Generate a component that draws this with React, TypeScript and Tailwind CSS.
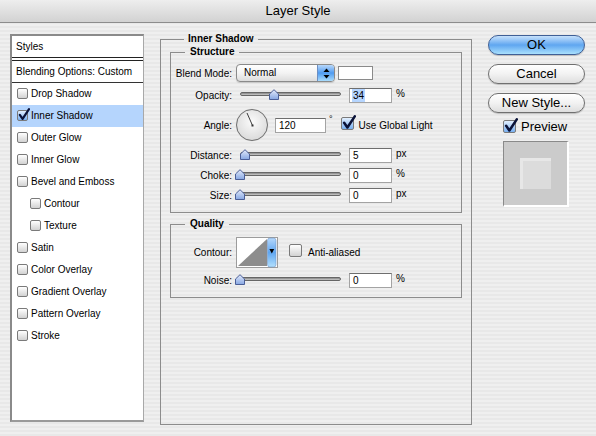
import React from "react";

function Box({ checked = false, size = "s" }: { checked?: boolean; size?: "s" | "m" }) {
  const dim = size === "s" ? "w-[11px] h-[11px]" : "w-[13px] h-[13px]";
  const bg = checked
    ? "bg-linear-to-b from-[#e2effe] to-[#78b0f1]"
    : "bg-linear-to-b from-[#ffffff] to-[#d2d2d2]";
  return (
    <span className={`relative inline-block shrink-0 rounded-[2px] border border-[#7a7a7a] ${dim} ${bg}`}>
      {checked && (
        <svg
          className="absolute left-[0px] top-[-3px]"
          width={size === "s" ? 12 : 14}
          height={size === "s" ? 13 : 15}
          viewBox="0 0 12 13"
        >
          <path
            d="M1.8 6.8 L4.6 10.8 L11 1.2"
            fill="none"
            stroke="#0a1238"
            strokeWidth="2.2"
            strokeLinecap="round"
            strokeLinejoin="round"
          />
        </svg>
      )}
    </span>
  );
}

function Label({ children }: { children: React.ReactNode }) {
  return <span className="w-[61px] shrink-0 text-right">{children}</span>;
}

function Field({ value, wide = false, hl = false }: { value: string; wide?: boolean; hl?: boolean }) {
  return (
    <span
      className={`flex h-[15px] items-center border border-[#a3a3a3] border-t-[#6e6e6e] bg-white pl-[2px] leading-[13px] ${
        wide ? "w-[51px]" : "w-[43px]"
      }`}
    >
      <span className={hl ? "bg-[#b5d5ff] px-[1px]" : "px-[1px]"}>{value}</span>
    </span>
  );
}

function Slider({ thumb }: { thumb: number }) {
  return (
    <div className="relative ml-[3px] h-[16px] w-[111px] shrink-0">
      <div className="absolute left-[5px] top-[5px] h-[4px] w-[101px] rounded-full border border-[#666666] bg-linear-to-b from-[#858585] to-[#cccccc]" />
      <svg className="absolute top-[2px]" style={{ left: thumb }} width="10" height="11" viewBox="0 0 10 11">
        <defs>
          <linearGradient id="tg" x1="0" y1="0" x2="0" y2="1">
            <stop offset="0" stopColor="#e4ebfb" />
            <stop offset="1" stopColor="#86a6e2" />
          </linearGradient>
        </defs>
        <path d="M0.5 10.5 V5 L5 0.7 L9.5 5 V10.5 Z" fill="url(#tg)" stroke="#4b5f97" strokeWidth="1" />
      </svg>
    </div>
  );
}

function SliderRow({
  label,
  thumb,
  value,
  unit,
  hl = false,
  mt,
}: {
  label: string;
  thumb: number;
  value: string;
  unit: string;
  hl?: boolean;
  mt: string;
}) {
  return (
    <div className={`flex h-[16px] items-center ${mt}`}>
      <Label>{label}</Label>
      <Slider thumb={thumb} />
      <span className="ml-[3px]">
        <Field value={value} hl={hl} />
      </span>
      <span className="ml-[4px] -mt-[4px]">{unit}</span>
    </div>
  );
}

function Dial() {
  return (
    <svg width="34" height="34" viewBox="0 0 34 34" className="shrink-0">
      <defs>
        <radialGradient id="dg" cx="50%" cy="40%" r="60%">
          <stop offset="0" stopColor="#fbfbfb" />
          <stop offset="1" stopColor="#dadada" />
        </radialGradient>
      </defs>
      <circle cx="17" cy="17" r="16.2" fill="#d8d8d8" />
      <circle cx="17" cy="17" r="15.5" fill="url(#dg)" stroke="#707070" strokeWidth="1" />
      <line x1="17.5" y1="17.5" x2="12" y2="5" stroke="#3c3c3c" strokeWidth="1" />
      <rect x="16.5" y="16.5" width="2" height="2" fill="#333" />
    </svg>
  );
}

function ContourPicker() {
  return (
    <svg width="42" height="31" viewBox="0 0 42 31" className="shrink-0">
      <defs>
        <linearGradient id="cb" x1="0" y1="0" x2="0" y2="1">
          <stop offset="0" stopColor="#b6d8fb" />
          <stop offset="0.5" stopColor="#5fa6f1" />
          <stop offset="1" stopColor="#b3e0fd" />
        </linearGradient>
      </defs>
      <rect x="0.5" y="0.5" width="41" height="30" fill="#fff" stroke="#9c9c9c" />
      <polygon points="2,29 31,2 31,29" fill="#8d8d8d" />
      <rect x="31.5" y="1" width="8.5" height="29" rx="2.5" fill="url(#cb)" stroke="#6f93c4" strokeWidth="0.6" />
      <polygon points="33.4,12 38.2,12 35.8,16.5" fill="#000" />
    </svg>
  );
}

function Select() {
  return (
    <div className="ml-[4px] flex h-[18px] w-[99px] shrink-0 overflow-hidden rounded-[4px] border border-[#8a8a8a] bg-linear-to-b from-[#ffffff] via-[#f3f3f3] to-[#dcdcdc] shadow-[0_1px_1px_rgba(0,0,0,0.15)]">
      <span className="flex-1 pl-[7px] leading-[16px]">Normal</span>
      <span className="flex h-full w-[17px] items-center justify-center border-l border-[#6d8fc2] bg-linear-to-b from-[#b8d8fa] via-[#4f9bf0] to-[#a9dcfc]">
        <svg width="7" height="11" viewBox="0 0 7 11">
          <polygon points="3.5,0.5 6.5,4 0.5,4" fill="#000" />
          <polygon points="0.5,7 6.5,7 3.5,10.5" fill="#000" />
        </svg>
      </span>
    </div>
  );
}

const items: { label: string; checked?: boolean; indent?: boolean }[] = [
  { label: "Drop Shadow" },
  { label: "Inner Shadow", checked: true },
  { label: "Outer Glow" },
  { label: "Inner Glow" },
  { label: "Bevel and Emboss" },
  { label: "Contour", indent: true },
  { label: "Texture", indent: true },
  { label: "Satin" },
  { label: "Color Overlay" },
  { label: "Gradient Overlay" },
  { label: "Pattern Overlay" },
  { label: "Stroke" },
];

function AquaButton({ children, primary = false }: { children: React.ReactNode; primary?: boolean }) {
  return (
    <div
      className={`flex h-[20px] w-[97px] items-center justify-center rounded-full border text-[13px] leading-[18px] text-black shadow-[0_1px_1px_rgba(0,0,0,0.2)] ${
        primary
          ? "border-[#3f5f96] bg-linear-to-b from-[#c6e1fb] via-[#5fa6f0] to-[#a9e0fd]"
          : "border-[#707070] bg-linear-to-b from-[#ffffff] via-[#f2f2f2] to-[#dedede]"
      }`}
    >
      {children}
    </div>
  );
}

export default function App() {
  return (
    <div className="h-[436px] w-[596px] overflow-hidden bg-[image:repeating-linear-gradient(180deg,#efefef_0px,#efefef_2px,#e8e8e8_2px,#e8e8e8_4px)] font-['Liberation_Sans',Arial,sans-serif] text-[10px] text-black">
      {/* Title bar */}
      <div className="flex h-[23px] items-center justify-center border-b border-[#8c8c8c] bg-linear-to-b from-[#eeeeee] to-[#d2d2d2] text-[13px]">
        Layer Style
      </div>

      <div className="flex items-start pl-[10px]">
        {/* Left list */}
        <div className="mt-[11px] h-[388px] w-[134px] shrink-0 border-t-2 border-r border-b-2 border-l-2 border-t-[#8a8a8a] border-r-[#a8a8a8] border-b-[#9a9a9a] border-l-[#8a8a8a] bg-white">
          <div className="flex h-[21px] items-center pl-[4px]">Styles</div>
          <div className="h-[4px] border-t border-b border-[#222]" />
          <div className="flex h-[22px] items-center border-b border-[#333] pb-[1px] pl-[4px]">Blending Options: Custom</div>
          {items.map((it) => (
            <div
              key={it.label}
              className={`flex h-[22px] items-center gap-[3px] pb-[2px] ${it.indent ? "pl-[18px]" : "pl-[5px]"} ${
                it.checked ? "bg-[#b5d5fd]" : ""
              }`}
            >
              <Box checked={it.checked} />
              <span>{it.label}</span>
            </div>
          ))}
        </div>

        {/* Middle group */}
        <fieldset className="ml-[16px] mt-[10px] h-[392px] w-[312px] shrink-0 border border-[#8c8c8c] px-[9px]">
          <legend className="ml-[14px] px-[4px] font-bold leading-[12px]">Inner Shadow</legend>

          <fieldset className="mt-[1px] w-[292px] border border-[#8c8c8c] pb-[9px]">
            <legend className="ml-[14px] px-[5px] font-bold leading-[12px]">Structure</legend>

            <div className="mt-[6px] flex h-[18px] items-center">
              <Label>Blend Mode:</Label>
              <Select />
              <span className="ml-[3px] h-[14px] w-[35px] border border-[#8a8a8a] bg-white" />
            </div>

            <SliderRow label="Opacity:" thumb={34} value="34" unit="%" hl mt="mt-[5px]" />

            <div className="mt-[5px] flex h-[34px] items-center">
              <Label>Angle:</Label>
              <span className="ml-[3px]">
                <Dial />
              </span>
              <span className="ml-[6px]">
                <Field value="120" wide />
              </span>
              <span className="ml-[3px] -mt-[10px] text-[9px]">°</span>
              <span className="ml-[8px]">
                <Box checked size="m" />
              </span>
              <span className="ml-[5px]">Use Global Light</span>
            </div>

            <SliderRow label="Distance:" thumb={5} value="5" unit="px" mt="mt-[5px]" />
            <SliderRow label="Choke:" thumb={0} value="0" unit="%" mt="mt-[4px]" />
            <SliderRow label="Size:" thumb={0} value="0" unit="px" mt="mt-[4px]" />
          </fieldset>

          <fieldset className="mt-[5px] w-[292px] border border-[#8c8c8c] pb-[9px]">
            <legend className="ml-[14px] px-[5px] font-bold leading-[12px]">Quality</legend>

            <div className="mt-[7px] flex h-[31px] items-center">
              <Label>Contour:</Label>
              <span className="ml-[4px]">
                <ContourPicker />
              </span>
              <span className="ml-[11px]">
                <Box size="m" />
              </span>
              <span className="ml-[6px]">Anti-aliased</span>
            </div>

            <SliderRow label="Noise:" thumb={0} value="0" unit="%" mt="mt-[4px]" />
          </fieldset>
        </fieldset>

        {/* Right column */}
        <div className="ml-[16px] mt-[12px] flex w-[97px] shrink-0 flex-col">
          <AquaButton primary>OK</AquaButton>
          <div className="mt-[9px]">
            <AquaButton>Cancel</AquaButton>
          </div>
          <div className="mt-[9px]">
            <AquaButton>New Style...</AquaButton>
          </div>
          <div className="ml-[15px] mt-[7px] flex h-[13px] items-center gap-[5px] text-[13px]">
            <Box checked size="m" />
            <span>Preview</span>
          </div>
          <div className="ml-[15px] mt-[8px] flex h-[66px] w-[66px] items-center justify-center border-t border-l border-b-2 border-r-2 border-t-[#8a8a8a] border-l-[#8a8a8a] border-b-white border-r-white bg-[#cbcbcb]">
            <div className="h-[31px] w-[31px] border-t-[3px] border-l-[3px] border-[#e7e7e7] bg-[#dcdcdc]" />
          </div>
        </div>
      </div>
    </div>
  );
}
